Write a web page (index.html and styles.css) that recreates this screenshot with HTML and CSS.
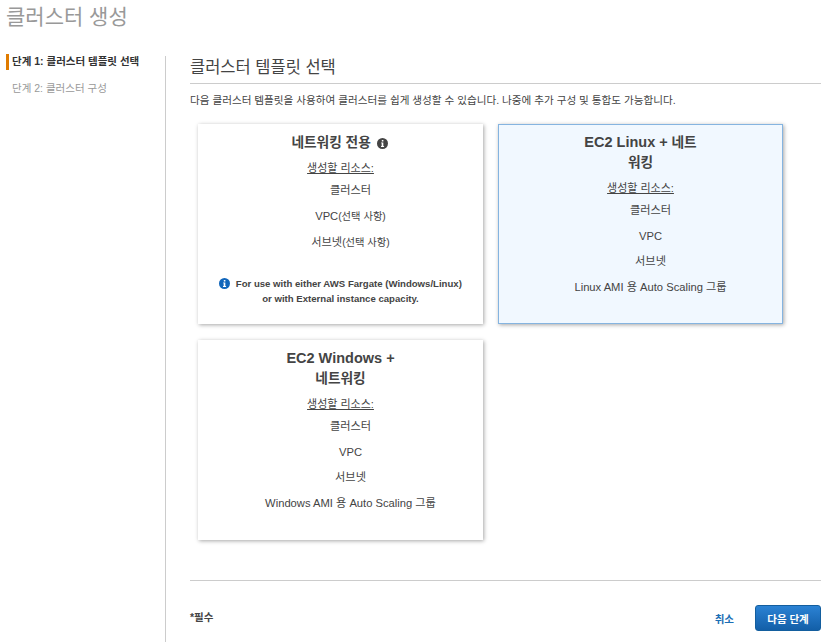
FILE: index.html
```html
<!DOCTYPE html>
<html lang="ko">
<head>
    <meta charset="UTF-8">
    <meta name="viewport" content="width=device-width, initial-scale=1.0">
    <title>클러스터 생성</title>
    <link rel="stylesheet" href="styles.css">
</head>
<body>
    <h1 class="page-title">클러스터 생성</h1>
    <div class="wizard">
        <nav class="steps">
            <div class="step active">단계 1: 클러스터 템플릿 선택</div>
            <div class="step">단계 2: 클러스터 구성</div>
        </nav>
        <main class="content">
            <h2 class="section-title">클러스터 템플릿 선택</h2>
            <p class="section-desc">다음 클러스터 템플릿을 사용하여 클러스터를 쉽게 생성할 수 있습니다. 나중에 추가 구성 및 통합도 가능합니다.</p>

            <div class="card-grid">
                <!-- Networking only -->
                <div class="card">
                    <div class="card-title">
                        네트워킹 전용
                        <svg class="info-icon dark" viewBox="0 0 16 16"><circle cx="8" cy="8" r="8"/><path class="glyph" d="M6 6.400h3.200v5.200h1.100V13H5.800v-1.400h1V7.800H6zM7 2.800h2.300v2.300H7z"/></svg>
                    </div>
                    <div class="res-label">생성할 리소스:</div>
                    <ul class="res-list">
                        <li>클러스터</li>
                        <li>VPC<span class="opt">(선택 사항)</span></li>
                        <li>서브넷<span class="opt">(선택 사항)</span></li>
                    </ul>
                    <div class="card-note">
                        <svg class="info-icon blue" viewBox="0 0 16 16"><circle cx="8" cy="8" r="8"/><path class="glyph" d="M6 6.400h3.200v5.200h1.100V13H5.800v-1.400h1V7.800H6zM7 2.800h2.300v2.300H7z"/></svg>
                        For use with either AWS Fargate (Windows/Linux)<br>or with External instance capacity.
                    </div>
                </div>

                <!-- EC2 Linux -->
                <div class="card selected">
                    <div class="card-title narrow"><span class="latin">EC2 Linux +</span> 네트<br>워킹</div>
                    <div class="res-label">생성할 리소스:</div>
                    <ul class="res-list">
                        <li>클러스터</li>
                        <li>VPC</li>
                        <li>서브넷</li>
                        <li>Linux AMI 용 Auto Scaling 그룹</li>
                    </ul>
                </div>

                <!-- EC2 Windows -->
                <div class="card">
                    <div class="card-title narrow"><span class="latin">EC2 Windows +</span><br>네트워킹</div>
                    <div class="res-label">생성할 리소스:</div>
                    <ul class="res-list">
                        <li>클러스터</li>
                        <li>VPC</li>
                        <li>서브넷</li>
                        <li>Windows AMI 용 Auto Scaling 그룹</li>
                    </ul>
                </div>
            </div>

            <div class="footer">
                <span class="required">*필수</span>
                <a class="cancel">취소</a>
                <button class="next-btn">다음 단계</button>
            </div>
        </main>
    </div>
</body>
</html>
```

FILE: styles.css
```css
:root {
    --text-color: #444444;
    --muted-color: #999999;
    --line-color: #cccccc;
    --link-color: #1b6fb5;
}

html, body {
    overflow: hidden;
}

body {
    font-family: "Liberation Sans", "Noto Sans CJK KR", sans-serif;
    color: var(--text-color);
    background-color: #ffffff;
    margin: 0;
    font-size: 11px;
}

.page-title {
    font-size: 21px;
    font-weight: normal;
    line-height: 24px;
    color: var(--muted-color);
    margin: 0;
    padding: 5px 0 0 6px;
}

.wizard {
    display: flex;
    margin-top: 27px;
    padding-left: 6px;
}

.steps {
    width: 159px;
    height: 590px;
    border-right: 1px solid var(--line-color);
    flex-shrink: 0;
}

.step {
    font-size: 10.500px;
    line-height: 14px;
    color: var(--muted-color);
    padding-left: 6px;
    margin-top: 11px;
    height: 14px;
}

.step.active {
    color: #333333;
    font-weight: bold;
    border-left: 3px solid #e07b00;
    padding-left: 3px;
    line-height: 15px;
    height: 16px;
    margin-top: -2px;
}

.content {
    width: 631px;
    margin-left: 24px;
}

.section-title {
    font-size: 16.500px;
    font-weight: normal;
    line-height: 22px;
    margin: 0;
    padding-bottom: 5px;
    border-bottom: 1px solid var(--line-color);
}

.section-desc {
    font-size: 10.600px;
    line-height: 14px;
    margin: 9px 0 0;
}

.card-grid {
    display: grid;
    grid-template-columns: 285px 285px;
    grid-auto-rows: 200px;
    column-gap: 15px;
    row-gap: 16px;
    margin: 17px 0 0 8px;
}

.card {
    background-color: #ffffff;
    box-shadow: 1px 1px 4px rgba(0, 0, 0, 0.35);
    text-align: center;
    padding-top: 9px;
    box-sizing: border-box;
}

.card.selected {
    background-color: #f1f8ff;
    border: 1px solid #85b4e0;
    padding-top: 8px;
}

.card-title {
    font-size: 13.700px;
    font-weight: bold;
    line-height: 20px;
    color: #444444;
}

.card-title.narrow {
    width: 160px;
    margin: 0 auto;
}

.card-title .latin {
    font-size: 14.500px;
    line-height: 1;
}

.info-icon {
    width: 11px;
    height: 11px;
    vertical-align: -2px;
    margin: 0 2px;
}

.info-icon.dark { fill: #444444; }
.info-icon.blue { fill: #1166bb; margin: 0 3px 0 0; }
.info-icon .glyph { fill: #ffffff; }

.res-label {
    font-size: 11px;
    line-height: 14px;
    text-decoration: underline;
    margin-top: 8px;
}

.res-list {
    list-style: none;
    margin: 0;
    padding: 0 0 0 20px;
}

.res-list li {
    font-size: 11.200px;
    line-height: 14px;
    margin-top: 11.500px;
}

.res-list li:first-child {
    margin-top: 8px;
}

.res-list .opt {
    font-size: 10.300px;
}

.card-note {
    font-size: 9.600px;
    font-weight: bold;
    line-height: 15px;
    margin-top: 26px;
}

.footer {
    display: flex;
    align-items: center;
    border-top: 1px solid var(--line-color);
    margin-top: 40px;
    padding-top: 24px;
}

.required {
    font-weight: bold;
    font-size: 10.500px;
    flex: 1;
    margin-bottom: 4px;
}

.cancel {
    color: var(--link-color);
    font-weight: bold;
    font-size: 10.500px;
    margin-right: 21px;
}

.next-btn {
    width: 66px;
    height: 26px;
    padding: 0;
    border: 1px solid #135e9e;
    border-radius: 3px;
    background: linear-gradient(#2b82d4, #135fa8);
    color: #ffffff;
    font-family: inherit;
    font-size: 10.500px;
    font-weight: bold;
    cursor: pointer;
}
```
